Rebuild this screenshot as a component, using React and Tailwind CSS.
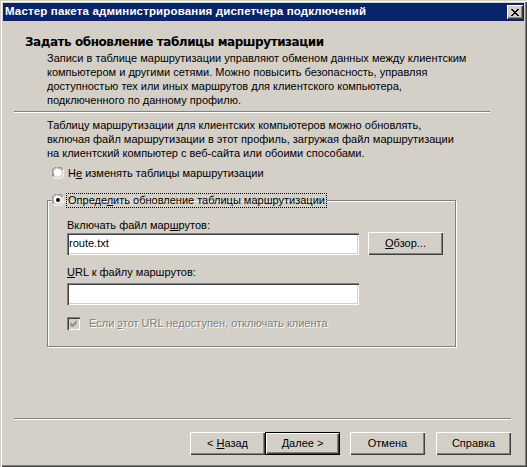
import React from "react";

const face = { fontFamily: '"Liberation Sans", Arial, sans-serif' };

function Radio({ checked }) {
  return (
    <svg width="12" height="12" viewBox="0 0 12 12" className="shrink-0">
      <path d="M11 2.5A6 6 0 0 0 1 9.5" fill="none" stroke="#808080" strokeWidth="1" />
      <path d="M10 3.2A5 5 0 0 0 2 8.8" fill="none" stroke="#404040" strokeWidth="1" />
      <circle cx="6" cy="6" r="4.5" fill="#fff" />
      <path d="M1 9.5A6 6 0 0 0 11 2.5" fill="none" stroke="#fff" strokeWidth="1" />
      <path d="M2 8.8A5 5 0 0 0 10 3.2" fill="none" stroke="#d4d0c8" strokeWidth="1" />
      {checked && <circle cx="6" cy="6" r="2" fill="#000" />}
    </svg>
  );
}

function Button({ children, primary }) {
  return (
    <div
      className={`w-[75px] h-[23px] flex items-center justify-center text-[11px] text-black bg-[#d4d0c8] ${
        primary
          ? "border border-black shadow-[inset_1px_1px_0_#fff,inset_-1px_-1px_0_#404040,inset_-2px_-2px_0_#808080]"
          : "shadow-[inset_1px_1px_0_#fff,inset_-1px_-1px_0_#404040,inset_-2px_-2px_0_#808080]"
      }`}
    >
      {children}
    </div>
  );
}

function Field({ value }) {
  return (
    <div className="w-[292px] h-[22px] bg-white flex items-center px-[2px] text-[11px] shadow-[inset_1px_1px_0_#808080,inset_2px_2px_0_#404040,inset_-1px_-1px_0_#fff,inset_-2px_-2px_0_#d4d0c8]">
      {value}
    </div>
  );
}

export default function App() {
  return (
    <div
      className="w-[527px] h-[467px] bg-[#d4d0c8] p-[3px] flex flex-col shadow-[inset_1px_1px_0_#d4d0c8,inset_2px_2px_0_#fff,inset_-1px_-1px_0_#404040,inset_-2px_-2px_0_#808080] text-black"
      style={face}
    >
      <div className="h-[18px] bg-[#0a246a] flex items-center justify-between pl-[2px] pr-[1px]">
        <span className="text-white font-bold text-[11.5px] tracking-[0.15px]">
          Мастер пакета администрирования диспетчера подключений
        </span>
        <div className="w-[16px] h-[14px] bg-[#d4d0c8] flex items-center justify-center shadow-[inset_1px_1px_0_#fff,inset_-1px_-1px_0_#404040,inset_-2px_-2px_0_#808080]">
          <svg width="8" height="7" viewBox="0 0 8 7">
            <path d="M0 0L7 7M1 0L8 7M7 0L0 7M8 0L1 7" stroke="#000" strokeWidth="1" />
          </svg>
        </div>
      </div>

      <div
        className="mt-[13px] pl-[22px] h-[16px] leading-[16px] text-[12px] font-bold tracking-[-0.45px]"
        style={{ fontFamily: '"DejaVu Sans", Verdana, sans-serif' }}
      >
        Задать обновление таблицы маршрутизации
      </div>
      <div className="mt-[1px] pl-[44px] text-[11px] leading-[14px]">
        <div>Записи в таблице маршрутизации управляют обменом данных между клиентским</div>
        <div>компьютером и другими сетями. Можно повысить безопасность, управляя</div>
        <div>доступностью тех или иных маршрутов для клиентского компьютера,</div>
        <div>подключенного по данному профилю.</div>
      </div>

      <div className="mt-[4px] ml-[11px] w-[476px] border-t border-t-[#808080] border-b border-b-white" />

      <div className="mt-[5px] pl-[44px] text-[11px] leading-[14px]">
        <div>Таблицу маршрутизации для клиентских компьютеров можно обновлять,</div>
        <div>включая файл маршрутизации в этот профиль, загружая файл маршрутизации</div>
        <div>на клиентский компьютер с веб-сайта или обоими способами.</div>
      </div>

      <div className="mt-[6px] ml-[49px] h-[14px] flex items-center gap-[3px] text-[11px]">
        <Radio />
        <span className="pl-[1px]">
          Н<u>е</u> изменять таблицы маршрутизации
        </span>
      </div>

      <fieldset className="mt-[13px] ml-[44px] w-[409px] border border-[#808080] shadow-[1px_1px_0_#fff,inset_1px_1px_0_#fff] pl-[19px] pb-[14px]">
        <legend className="-ml-[15px] h-[14px] flex items-center gap-[3px] text-[11px] pr-[1px]">
          <Radio checked />
          <span className="outline outline-1 outline-dotted outline-black px-[1px] leading-[13px]">
            Опреде<u>л</u>ить обновление таблицы маршрутизации
          </span>
        </legend>
        <div className="mt-[11px] text-[11px] leading-[14px]">
          Включать файл мар<u>ш</u>рутов:
        </div>
        <div className="flex items-center gap-[9px]">
          <Field value="route.txt" />
          <Button>
            <span>
              <u>О</u>бзор...
            </span>
          </Button>
        </div>
        <div className="mt-[10px] text-[11px] leading-[14px]">
          <u>U</u>RL к файлу маршрутов:
        </div>
        <div className="mt-[4px]">
          <Field value="" />
        </div>
        <div className="mt-[10px] flex items-center gap-[9px] text-[11px]">
          <div className="w-[13px] h-[13px] bg-[#d4d0c8] flex items-center justify-center shadow-[inset_1px_1px_0_#808080,inset_2px_2px_0_#404040,inset_-1px_-1px_0_#fff,inset_-2px_-2px_0_#d4d0c8]">
            <svg width="7" height="7" viewBox="0 0 7 7">
              <path d="M0 2.5L2.5 5L7 0.5M0 3.5L2.5 6L7 1.5M0 4.5L2.5 7L7 2.5" fill="none" stroke="#808080" strokeWidth="1" />
            </svg>
          </div>
          <span className="text-[#808080] [text-shadow:1px_1px_0_#fff]">
            Если <u>э</u>тот URL недоступен, отключать клиента
          </span>
        </div>
      </fieldset>

      <div className="mt-auto ml-[11px] mr-[13px] border-t border-t-[#808080] border-b border-b-white" />

      <div className="mt-[12px] mb-[9px] pr-[13px] flex justify-end">
        <div className="flex">
          <Button>
            <span>
              &lt; <u>Н</u>азад
            </span>
          </Button>
          <Button primary>
            <span>
              <u>Д</u>алее &gt;
            </span>
          </Button>
        </div>
        <div className="ml-[10px]">
          <Button>Отмена</Button>
        </div>
        <div className="ml-[11px]">
          <Button>Справка</Button>
        </div>
      </div>
    </div>
  );
}
